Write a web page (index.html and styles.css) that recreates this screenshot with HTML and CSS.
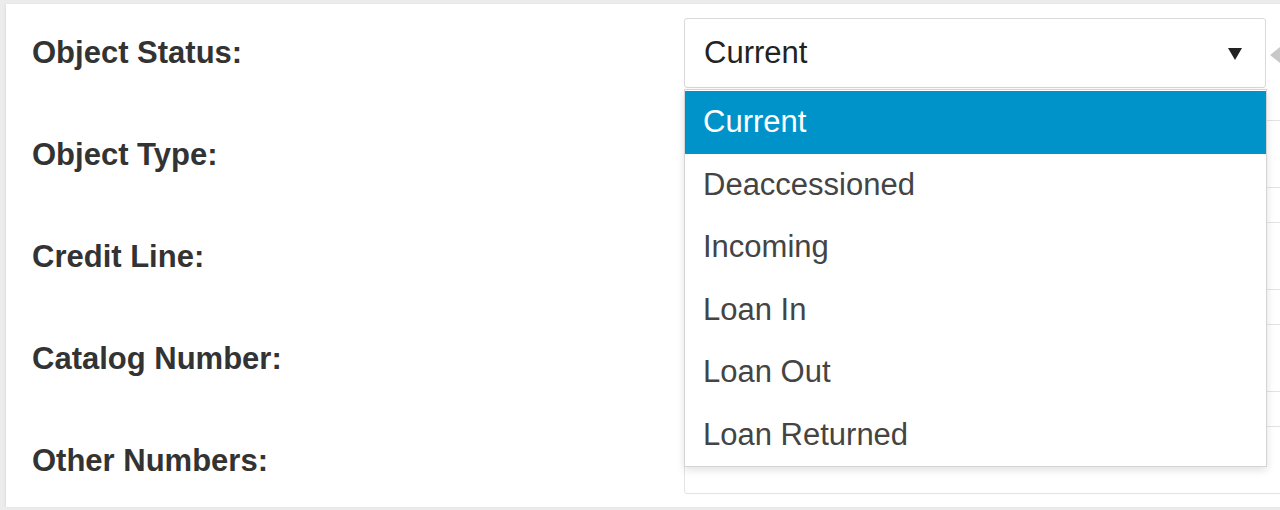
FILE: index.html
```html
<!DOCTYPE html>
<html>
<head>
<meta charset="utf-8">
<link rel="stylesheet" href="styles.css">
</head>
<body>
<div class="panel">
  <form class="form">
    <div class="row">
      <label class="label">Object Status:</label>
      <div class="field field-status">
        <div class="select">
          <span class="select-value">Current</span>
          <span class="caret"></span>
        </div>
        <span class="pop-arrow"></span>
        <ul class="menu">
          <li class="opt active">Current</li>
          <li class="opt">Deaccessioned</li>
          <li class="opt">Incoming</li>
          <li class="opt">Loan In</li>
          <li class="opt">Loan Out</li>
          <li class="opt">Loan Returned</li>
        </ul>
      </div>
    </div>
    <div class="row">
      <label class="label">Object Type:</label>
      <div class="field"><div class="input"></div></div>
    </div>
    <div class="row">
      <label class="label">Credit Line:</label>
      <div class="field"><div class="input"></div></div>
    </div>
    <div class="row">
      <label class="label">Catalog Number:</label>
      <div class="field"><div class="input"></div></div>
    </div>
    <div class="row">
      <label class="label">Other Numbers:</label>
      <div class="field"><div class="input"></div></div>
    </div>
  </form>
</div>
</body>
</html>
```
FILE: styles.css
```css
html, body {
  margin: 0;
  padding: 0;
}
body {
  background: #ececec;
  font-family: "Liberation Sans", Arial, sans-serif;
  width: 1280px;
  height: 510px;
  overflow: hidden;
}
.panel {
  margin: 4px 0 0 6px;
  height: 503px;
  background: #fff;
  box-shadow: -1px 0 2px rgba(0,0,0,0.06);
  overflow: hidden;
}
.form {
  padding-top: 14px;
  display: flex;
  flex-direction: column;
  gap: 32px;
}
.row {
  display: grid;
  grid-template-columns: 678px 1fr;
  align-items: center;
  height: 70px;
}
.label {
  padding-left: 26px;
  font-weight: bold;
  font-size: 31px;
  color: #333;
}
.field {
  position: relative;
  height: 70px;
}
.input {
  height: 66px;
  border: 1px solid #e3e3e3;
  border-radius: 3px;
  margin-right: -4px;
}
.field-status {
  width: 582px;
}
.select {
  box-sizing: border-box;
  height: 70px;
  border: 1px solid #d9d9d9;
  border-radius: 3px;
  display: flex;
  align-items: center;
  justify-content: space-between;
  padding: 0 23px 0 19px;
  font-size: 31px;
  color: #222;
  background: #fff;
}
.caret {
  width: 0;
  height: 0;
  margin-top: 2px;
  border-left: 7.5px solid transparent;
  border-right: 7.5px solid transparent;
  border-top: 12px solid #222;
}
.pop-arrow {
  position: absolute;
  left: 586px;
  top: 29px;
  width: 0;
  height: 0;
  border-top: 8px solid transparent;
  border-bottom: 8px solid transparent;
  border-right: 10px solid #c8c8c8;
}
.menu {
  position: absolute;
  left: 0;
  top: 71px;
  width: 583px;
  box-sizing: border-box;
  margin: 0;
  padding: 1px 0 0 0;
  list-style: none;
  background: #fff;
  border: 1px solid #d4d4d4;
  box-shadow: 0 3px 8px rgba(0,0,0,0.12);
  z-index: 5;
}
.opt {
  height: 62.5px;
  line-height: 62px;
  padding-left: 18px;
  font-size: 31px;
  color: #444;
}
.opt.active {
  background: #0093c9;
  color: #fff;
}
```
